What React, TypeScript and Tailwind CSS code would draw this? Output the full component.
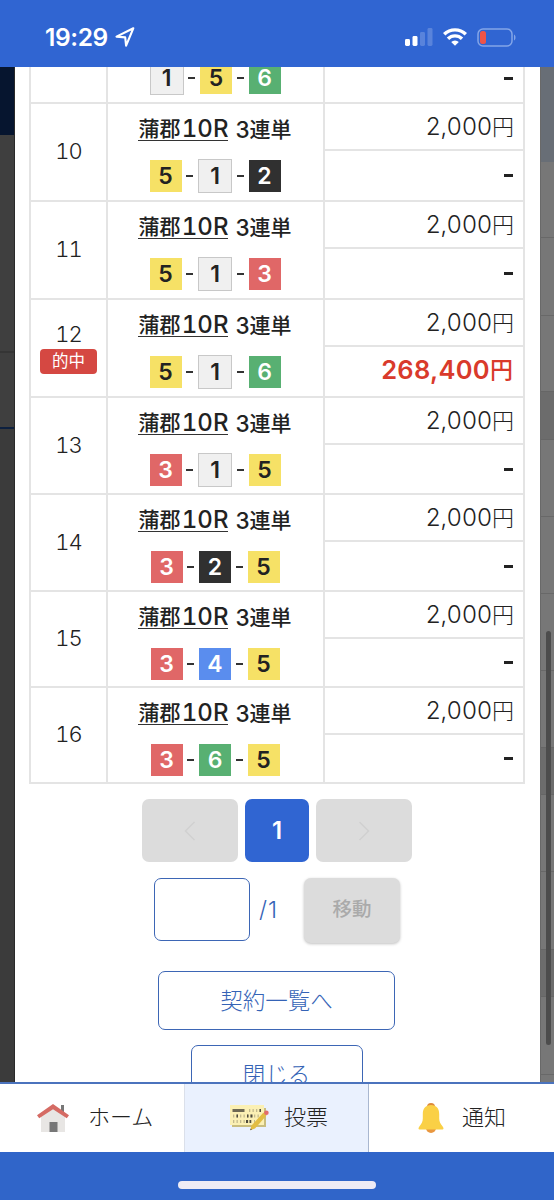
import React from 'react';
import clsx from 'clsx';

type Bet = {
    no: number;
    boats: number[];
    payout?: string;
    height: string;
};

const BETS: Bet[] = [
    { no: 10, boats: [5, 1, 2], height: 'h-[98px]' },
    { no: 11, boats: [5, 1, 3], height: 'h-[98px]' },
    { no: 12, boats: [5, 1, 6], payout: '268,400', height: 'h-[98px]' },
    { no: 13, boats: [3, 1, 5], height: 'h-[97px]' },
    { no: 14, boats: [3, 2, 5], height: 'h-[97px]' },
    { no: 15, boats: [3, 4, 5], height: 'h-[96px]' },
    { no: 16, boats: [3, 6, 5], height: 'h-[96px]' },
];

const BOAT_COLORS: Record<number, string> = {
    1: 'w-[34px] h-[34px] bg-[#f0f0f0] border border-[#c8c8c8] text-[#222]',
    2: 'w-8 h-8 bg-[#303030] text-white',
    3: 'w-8 h-8 bg-[#e06767] text-white',
    4: 'w-8 h-8 bg-[#5a8dee] text-white',
    5: 'w-8 h-8 bg-[#f6e166] text-[#222]',
    6: 'w-8 h-8 bg-[#58b072] text-white',
};

const Boats: React.FC<{ boats: number[] }> = ({ boats }) => (
    <div className="flex h-[34px] items-center justify-center">
        {boats.map((boat, i) => (
            <React.Fragment key={i}>
                {i > 0 && <span className="flex w-[16.5px] justify-center"><span className="h-[2px] w-[7px] bg-[#333]" /></span>}
                <span className={clsx('flex items-center justify-center text-[23px] leading-none font-semibold', BOAT_COLORS[boat])}>
                    {boat}
                </span>
            </React.Fragment>
        ))}
    </div>
);

const Dash: React.FC = () => <span className="h-[3px] w-[9px] bg-[#222]" />;

const BetRow: React.FC<{ bet: Bet }> = ({ bet }) => (
    <div className={clsx('flex border-t-2 border-[#e4e4e4]', bet.height)}>
        <div className="flex w-[75px] flex-col items-center justify-center pb-px text-[22px] font-light text-[#222]">
            <span className="leading-[25px] tracking-[-1px] tabular-nums">{bet.no}</span>
            {bet.payout && (
                <span className="mt-[2px] mb-[-1px] flex h-[25px] w-[57px] items-center justify-center rounded-[4px] bg-[#d54842] text-[16.5px] font-normal text-white">
                    的中
                </span>
            )}
        </div>
        <div className="w-[219px] border-x-2 border-[#e4e4e4] pt-[11px] pr-px">
            <div className="flex h-[28px] items-center justify-center text-[21px] leading-[21px] font-medium text-[#222]">
                <span className="flex h-[23px] w-[90px] items-center justify-between border-b-[1.5px] border-[#333]">
                    <span>蒲郡</span>
                    <span className="text-[24px] tabular-nums">10R</span>
                </span>
                <span className="ml-[7px] text-[22.5px]">3</span>
                <span>連単</span>
            </div>
            <div className="mt-[16px]">
                <Boats boats={bet.boats} />
            </div>
        </div>
        <div className="flex flex-1 flex-col">
            <div className="flex h-[45px] items-center justify-end pr-[9px] pt-px text-[24px] font-light text-[#222]">
                <span className="tracking-[-0.4px] tabular-nums">2,000</span>
                <span className="text-[22px]">円</span>
            </div>
            <div className="flex flex-1 items-center justify-end border-t-2 border-[#e4e4e4] pr-[10px]">
                {bet.payout ? (
                    <span className="flex items-center pb-[2px] text-[25.5px] font-semibold text-[#d93a2b]">
                        <span className="tracking-[0.3px]">{bet.payout}</span>
                        <span className="text-[23px] font-medium">円</span>
                    </span>
                ) : (
                    <Dash />
                )}
            </div>
        </div>
    </div>
);

const StatusBar: React.FC = () => (
    <header className="flex h-[67px] shrink-0 items-center justify-between bg-[#3065d2] pt-[7px] pr-[37px] pl-[45px] text-white">
        <div className="flex items-center">
            <span className="w-[65px] text-[24.5px] font-semibold tracking-[-0.4px]">19:29</span>
            <svg className="ml-[5px] h-5 w-5" viewBox="0 0 20 20" fill="none" stroke="currentColor" strokeWidth="2.1" strokeLinejoin="round">
                <path d="M18.3 1.3 1.5 9.6l8.7.8.9 8.3z" />
            </svg>
        </div>
        <div className="flex items-center">
            <svg className="h-[18px] w-7" viewBox="0 0 28 18" fill="currentColor">
                <rect x="0" y="11" width="5" height="7" rx="1.4" />
                <rect x="7.5" y="8" width="5" height="10" rx="1.4" />
                <rect x="15" y="4" width="5" height="14" rx="1.4" opacity=".2" />
                <rect x="22.5" y="0" width="5" height="18" rx="1.4" opacity=".2" />
            </svg>
            <svg className="ml-[10px] h-[18px] w-6" viewBox="0 0 24 18" fill="none" stroke="currentColor" strokeWidth="3.4">
                <path d="M1.2 6.3a15.3 15.3 0 0 1 21.6 0" />
                <path d="M5 10.8a9.9 9.9 0 0 1 14 0" />
                <path d="M12 17.8 8.2 14a5.4 5.4 0 0 1 7.6 0z" fill="currentColor" stroke="none" />
            </svg>
            <svg className="ml-[10px] h-[19px] w-[40px]" viewBox="0 0 40 19">
                <rect x="1" y="1" width="34" height="17" rx="5" fill="none" stroke="#83a5e8" strokeWidth="1.5" />
                <rect x="3" y="3" width="6" height="13" rx="2.5" fill="#ee5449" />
                <path d="M37 6.5c2 .8 2 5.2 0 6z" fill="#83a5e8" />
            </svg>
        </div>
    </header>
);

const HomeIcon: React.FC = () => (
    <svg className="h-[30px] w-8" viewBox="0 0 32 30">
        <path d="M24 2h3v8h-3z" fill="#777" />
        <path d="M4 12 16 3l12 9v17H4z" fill="#e8e6e4" />
        <path d="M16 1 0 12.2l2.2 3L16 6.3l13.8 8.9 2.2-3z" fill="#d56b64" />
        <path d="M12.5 19h8v10h-8z" fill="#777" />
    </svg>
);

const VoteIcon: React.FC = () => (
    <svg className="h-[29px] w-[41px]" viewBox="0 0 41 29">
        <path d="M3 5h34v19H3z" fill="#c9bd7e" />
        <path d="M1 2h34v20H1z" fill="#fbf0b4" />
        <path d="M3.5 6h12v3h-12z" fill="#6e6953" />
        <path d="M20 7.5h12M4 13h28M4 18.5h22" stroke="#c3b98d" strokeWidth="3.2" strokeDasharray="1.3 2.2" />
        <path d="M30.5 6h1.5v3h-1.5zM7.5 11.5H9v3H7.5zM18 11.5h1.5v3H18zM21.5 11.5h2v3h-2zM17 17h2v3h-2zM20.5 17h1.5v3h-1.5z" fill="#4d4a3d" />
        <path d="m34.5 9.5 3 3L26 25.5l-4.8 1.7 1.3-4.7z" fill="#e2bd43" />
        <path d="m21.2 27.2 1.7-.6-1.1-1.2z" fill="#444" />
        <circle cx="37.4" cy="9.8" r="2.3" fill="#e36c6a" />
    </svg>
);

const BellIcon: React.FC = () => (
    <svg className="h-[32px] w-[26px]" viewBox="0 0 26 32">
        <path d="M9 5a4 4 0 0 1 8 0z" fill="#dd8a3b" />
        <path d="M8 26h10a5 5 0 0 1-10 0z" fill="#e9973f" />
        <path d="M13 3c-5.5 0-8.2 3.7-8.2 9v4.5c0 3-1.4 5.5-3.3 7.7C-.2 26.5.5 27.5 2 27.5h22c1.5 0 2.2-1 .5-3.3-1.9-2.2-3.3-4.7-3.3-7.7V12c0-5.3-2.7-9-8.2-9z" fill="#fad046" />
    </svg>
);

const BackdropLeft: React.FC = () => (
    <div className="flex w-[15px] shrink-0 flex-col border-r border-[#292929] bg-[#3b3b3b]">
        <div className="h-[68px] bg-[#06152f]" />
        <div className="h-[216px] bg-[#3f3f3f]" />
        <div className="h-[2px] bg-[#353535]" />
        <div className="h-[74px] bg-[#3f3f3f]" />
        <div className="h-[2px] bg-[#0d203f]" />
    </div>
);

const BackdropRight: React.FC = () => (
    <div className="relative flex w-[14px] shrink-0 flex-col border-l border-[#696969] bg-[#777]">
        <div className="h-[95px] shrink-0 bg-[#686e76]" />
        <div className="h-[76px] shrink-0 border-b border-[#686868]" />
        <div className="h-[78px] shrink-0 border-b border-[#686868]" />
        <div className="h-[75px] shrink-0" />
        <div className="h-[49px] shrink-0 border-y border-[#666] bg-[#6c6c6c]" />
        <div className="h-[77px] shrink-0 border-b border-[#686868]" />
        <div className="h-[77px] shrink-0 border-b border-[#686868]" />
        <div className="h-[77px] shrink-0 border-b border-[#686868]" />
        <div className="h-[76px] shrink-0" />
        <div className="h-[48px] shrink-0 border-y border-[#666] bg-[#6c6c6c]" />
        <div className="h-[77px] shrink-0 border-b border-[#686868]" />
        <div className="h-[77px] shrink-0" />
        <div className="h-[48px] shrink-0 border-y border-[#666] bg-[#6c6c6c]" />
        <div className="h-[78px] shrink-0 border-b border-[#686868]" />
        <div className="absolute top-[564px] left-[5px] h-[414px] w-[5px] rounded-full bg-[#4c4c4c]" />
    </div>
);

const Pager: React.FC = () => (
    <>
        <div className="mt-[15px] flex justify-center gap-[7px]">
            <button className="flex h-[63px] w-24 items-center justify-center rounded-[7px] bg-[#dcdcdc]">
                <svg className="h-5 w-3" viewBox="0 0 12 20" fill="none" stroke="#d0d0d0" strokeWidth="1.5"><path d="m10.5 1-9 9 9 9" /></svg>
            </button>
            <button className="h-[63px] w-16 rounded-[7px] bg-[#3065d2] text-[24px] font-semibold text-white">1</button>
            <button className="flex h-[63px] w-24 items-center justify-center rounded-[7px] bg-[#dcdcdc]">
                <svg className="h-5 w-3" viewBox="0 0 12 20" fill="none" stroke="#d0d0d0" strokeWidth="1.5"><path d="m1.5 1 9 9-9 9" /></svg>
            </button>
        </div>
        <div className="mt-[16px] flex justify-center">
            <input aria-label="page" className="h-[63px] w-24 rounded-[7px] border-[1.5px] border-[#3d66b5]" />
            <span className="flex w-[54px] items-center pl-[9px] text-[23px] font-light tracking-[1px] text-[#3563b6]">/1</span>
            <button className="h-[65px] w-24 rounded-[7px] bg-[#dcdcdc] pb-px text-[19.5px] font-medium text-[#aaa] shadow-[0_1px_3px_rgba(0,0,0,0.25)]">移動</button>
        </div>
    </>
);

const TABS = [
    { label: 'ホーム', icon: <HomeIcon />, style: 'w-[184px] pl-[37px] gap-[19px]' },
    { label: '投票', icon: <VoteIcon />, style: 'w-[185px] pl-[44px] gap-[14px] bg-[#eaf1fe] border-x border-l-[#dbe0ea] border-r-[#a9b7d0]' },
    { label: '通知', icon: <BellIcon />, style: 'flex-1 pl-[49px] gap-[18px]' },
];

export default function App() {
    return (
        <div className="flex h-[1200px] w-[554px] flex-col overflow-hidden bg-white font-['Inter','Noto_Sans_CJK_JP',sans-serif]">
            <StatusBar />
            <main className="flex h-[1015px] shrink-0 overflow-hidden">
                <BackdropLeft />
                <section className="w-[525px] shrink-0 bg-white pr-px">
                    <div className="ml-[14px] w-[496px] border-x-2 border-b-2 border-[#e4e4e4]">
                        {/* tail of the ninth bet, scrolled under the status bar */}
                        <div className="flex h-[35px] overflow-hidden">
                            <div className="w-[75px]" />
                            <div className="w-[219px] border-x-2 border-[#e4e4e4] pr-px">
                                <div className="-mt-[6px]">
                                    <Boats boats={[1, 5, 6]} />
                                </div>
                            </div>
                            <div className="flex flex-1 items-start justify-end pt-[10px] pr-[10px]">
                                <Dash />
                            </div>
                        </div>
                        {BETS.map((bet) => (
                            <BetRow key={bet.no} bet={bet} />
                        ))}
                    </div>
                    <Pager />
                    <div className="mt-[28px] flex flex-col items-center gap-[15px] pr-px">
                        <button className="h-[59px] w-[237px] rounded-[7px] border-[1.5px] border-[#3d66b5] text-[22.5px] font-light text-[#3563b6]">契約一覧へ</button>
                        <button className="h-[59px] w-[172px] rounded-[7px] border-[1.5px] border-[#3d66b5] text-[22.5px] font-light text-[#3563b6]">閉じる</button>
                    </div>
                </section>
                <BackdropRight />
            </main>
            <nav className="flex h-[70px] shrink-0 border-t-2 border-[#4b73bd] text-[22px] font-light text-[#222]">
                {TABS.map((tab) => (
                    <a key={tab.label} className={clsx('flex items-center pb-px', tab.style)}>
                        {tab.icon}
                        <span className="whitespace-nowrap">{tab.label}</span>
                    </a>
                ))}
            </nav>
            <footer className="flex h-[48px] shrink-0 justify-center bg-[#3065c9] pt-[29px]">
                <div className="h-2 w-[198px] rounded-full bg-[#eeebf5]" />
            </footer>
        </div>
    );
}
